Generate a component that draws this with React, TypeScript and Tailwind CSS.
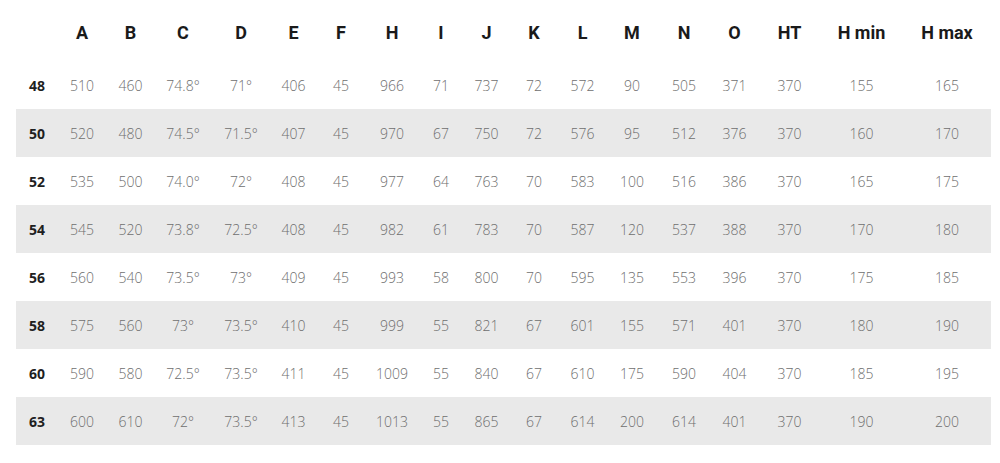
const columns = ["A", "B", "C", "D", "E", "F", "H", "I", "J", "K", "L", "M", "N", "O", "HT", "H min", "H max"];

const rows: string[][] = [
  ["48", "510", "460", "74.8°", "71°", "406", "45", "966", "71", "737", "72", "572", "90", "505", "371", "370", "155", "165"],
  ["50", "520", "480", "74.5°", "71.5°", "407", "45", "970", "67", "750", "72", "576", "95", "512", "376", "370", "160", "170"],
  ["52", "535", "500", "74.0°", "72°", "408", "45", "977", "64", "763", "70", "583", "100", "516", "386", "370", "165", "175"],
  ["54", "545", "520", "73.8°", "72.5°", "408", "45", "982", "61", "783", "70", "587", "120", "537", "388", "370", "170", "180"],
  ["56", "560", "540", "73.5°", "73°", "409", "45", "993", "58", "800", "70", "595", "135", "553", "396", "370", "175", "185"],
  ["58", "575", "560", "73°", "73.5°", "410", "45", "999", "55", "821", "67", "601", "155", "571", "401", "370", "180", "190"],
  ["60", "590", "580", "72.5°", "73.5°", "411", "45", "1009", "55", "840", "67", "610", "175", "590", "404", "370", "185", "195"],
  ["63", "600", "610", "72°", "73.5°", "413", "45", "1013", "55", "865", "67", "614", "200", "614", "401", "370", "190", "200"],
];

const gridCols =
  "grid grid-cols-[42px_48px_49px_56px_60px_45px_50px_52px_46px_45px_50px_47px_52px_52px_49px_61px_83px_88px]";

export default function App() {
  return (
    <div className="w-[1000px] h-[463px] bg-white pl-4 pr-[9px] font-['Open_Sans',sans-serif]">
      <div className={`${gridCols} h-[61px] items-center pt-[3px]`}>
        <div />
        {columns.map((c) => (
          <div key={c} className="text-center font-['Roboto',sans-serif] font-bold text-[18px] text-[#1a1a1a]">
            {c}
          </div>
        ))}
      </div>
      {rows.map((r, i) => (
        <div key={r[0]} className={`${gridCols} h-12 items-center ${i % 2 === 1 ? "bg-[#e9e9e9]" : "bg-white"}`}>
          {r.map((v, j) =>
            j === 0 ? (
              <div key={j} className="text-center font-bold text-[14px] text-[#1f1f1f]">
                {v}
              </div>
            ) : (
              <div key={j} className="text-center font-light text-[14px] text-[#6e6e6e]">
                {v}
              </div>
            )
          )}
        </div>
      ))}
    </div>
  );
}
